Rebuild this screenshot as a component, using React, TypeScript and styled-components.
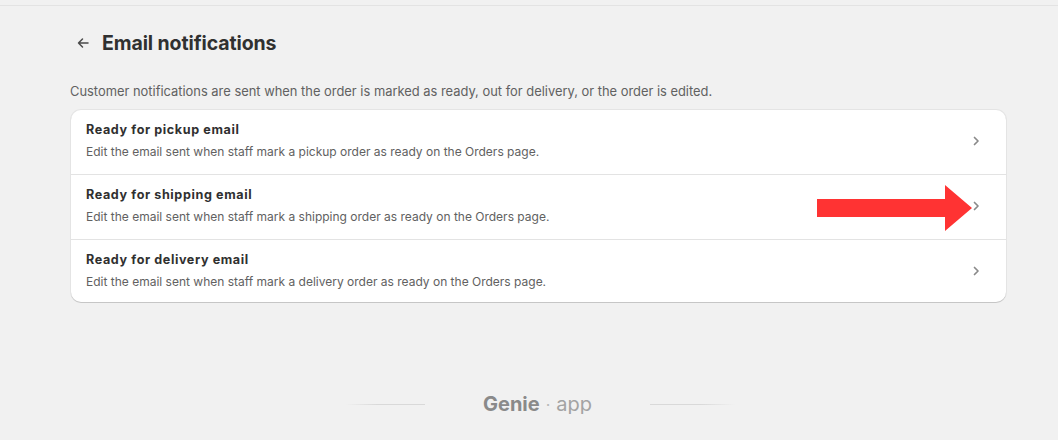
import React from 'react';
import styled, { createGlobalStyle } from 'styled-components';

const GlobalStyle = createGlobalStyle`
  html, body {
    margin: 0;
    padding: 0;
    background: #f1f1f1;
    font-family: Inter, "Noto Sans", sans-serif;
    -webkit-font-smoothing: antialiased;
  }
`;

const TopLine = styled.div`
  height: 5px;
  border-bottom: 1px solid #e3e3e3;
`;

const Page = styled.main`
  width: 936px;
  padding: 23px 0 0 70px;
`;

const Header = styled.div`
  display: flex;
  align-items: center;
  gap: 11px;
  height: 28px;
  padding-left: 5px;
`;

const BackButton = styled.button`
  display: flex;
  align-items: center;
  justify-content: center;
  width: 16px;
  height: 16px;
  padding: 0;
  border: none;
  background: none;
  color: #4a4a4a;
  cursor: pointer;
`;

const Title = styled.h1`
  margin: 0;
  font-size: 19.5px;
  font-weight: 700;
  color: #303030;
  letter-spacing: -0.1px;
`;

const Intro = styled.p`
  margin: 26px 0 0;
  font-size: 12.9px;
  line-height: 17px;
  color: #616161;
`;

const Card = styled.div`
  margin: 10px 0 0 1px;
  background: #fff;
  border-radius: 10px;
  box-shadow: 0 1px 0 rgba(0, 0, 0, 0.13), 0 0 0 1px rgba(0, 0, 0, 0.05);
`;

const Row = styled.div<{ $last?: boolean }>`
  position: relative;
  display: flex;
  align-items: center;
  padding: 12px 22px ${(p) => (p.$last ? '12px' : '14px')} 15px;
  border-bottom: ${(p) => (p.$last ? 'none' : '1px solid #e3e3e3')};
  cursor: pointer;
`;

const RowText = styled.div`
  flex: 1;
  display: flex;
  flex-direction: column;
  gap: 6px;
`;

const RowTitle = styled.div`
  font-size: 12.6px;
  line-height: 16px;
  font-weight: 700;
  letter-spacing: 0.6px;
  color: #303030;
`;

const RowDesc = styled.div`
  font-size: 12px;
  line-height: 16px;
  color: #616161;
`;

const Chevron = styled.span`
  display: flex;
  color: #8a8a8a;
`;

const Annotation = styled.svg`
  position: absolute;
  left: 746px;
  top: 10px;
  pointer-events: none;
`;

const Footer = styled.footer`
  display: flex;
  align-items: center;
  justify-content: center;
  gap: 58px;
  margin-top: 92px;
  height: 20px;
  padding-left: 22px;
`;

const FooterLine = styled.span<{ $dir: 'left' | 'right'; $width: number }>`
  width: ${(p) => p.$width}px;
  height: 1px;
  background: linear-gradient(
    to ${(p) => p.$dir},
    #d9d9d9 60%,
    rgba(217, 217, 217, 0)
  );
`;

const Brand = styled.div`
  font-size: 20px;
  color: #a3a3a3;
  display: flex;
  align-items: baseline;
  gap: 6px;
`;

const BrandName = styled.span`
  font-weight: 700;
  color: #8a8a8a;
`;

const BrandDot = styled.span`
  color: #b8b8b8;
  font-size: 16px;
`;

const rows = [
  {
    title: 'Ready for pickup email',
    desc: 'Edit the email sent when staff mark a pickup order as ready on the Orders page.',
  },
  {
    title: 'Ready for shipping email',
    desc: 'Edit the email sent when staff mark a shipping order as ready on the Orders page.',
    highlight: true,
  },
  {
    title: 'Ready for delivery email',
    desc: 'Edit the email sent when staff mark a delivery order as ready on the Orders page.',
  },
];

const ChevronIcon = () => (
  <svg width="16" height="16" viewBox="0 0 16 16" fill="none">
    <path d="M6.5 4.5 10 8l-3.5 3.5" stroke="currentColor" strokeWidth="1.7" strokeLinecap="round" strokeLinejoin="round" />
  </svg>
);

export default function App() {
  return (
    <>
      <GlobalStyle />
      <TopLine />
      <Page>
        <Header>
          <BackButton aria-label="Back">
            <svg width="16" height="16" viewBox="0 0 16 16" fill="none">
              <path d="M13 8H3.5M7.5 4 3.5 8l4 4" stroke="currentColor" strokeWidth="1.5" strokeLinecap="round" strokeLinejoin="round" />
            </svg>
          </BackButton>
          <Title>Email notifications</Title>
        </Header>
        <Intro>
          Customer notifications are sent when the order is marked as ready, out for delivery, or the order is edited.
        </Intro>
        <Card>
          {rows.map((row, i) => (
            <Row key={row.title} $last={i === rows.length - 1}>
              <RowText>
                <RowTitle>{row.title}</RowTitle>
                <RowDesc>{row.desc}</RowDesc>
              </RowText>
              <Chevron>
                <ChevronIcon />
              </Chevron>
              {row.highlight && (
                <Annotation width="156" height="46" viewBox="0 0 156 46">
                  <polygon points="0,14 128,14 128,0 155,23 128,46 128,32 0,32" fill="#ff3333" />
                </Annotation>
              )}
            </Row>
          ))}
        </Card>
      </Page>
      <Footer>
        <FooterLine $dir="left" $width={80} />
        <Brand>
          <BrandName>Genie</BrandName>
          <BrandDot>·</BrandDot>
          <span>app</span>
        </Brand>
        <FooterLine $dir="right" $width={85} />
      </Footer>
    </>
  );
}
